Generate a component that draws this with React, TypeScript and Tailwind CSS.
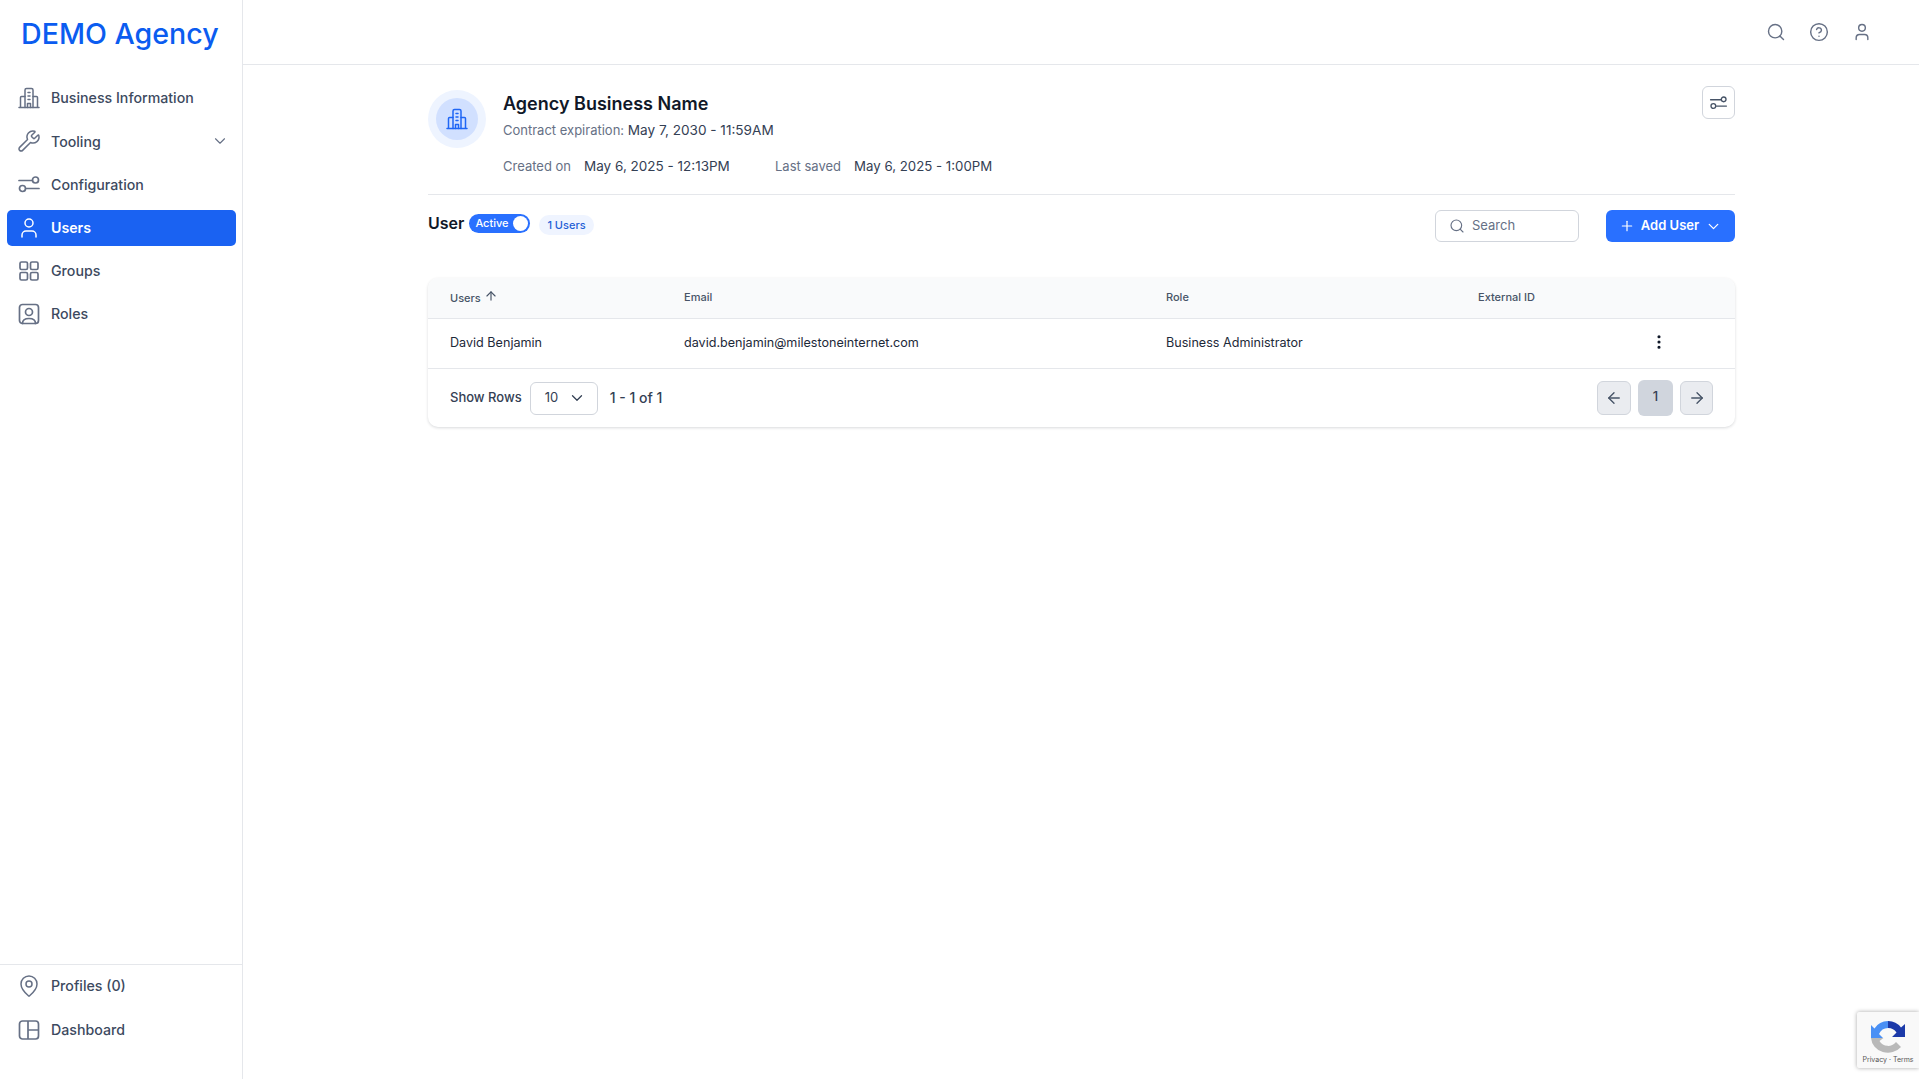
import { ArrowLeft, ArrowRight, ArrowUp, ChevronDown, CircleHelp, EllipsisVertical, MapPin, Plus, Search, User, Wrench } from 'lucide-react';

type IconProps = { className?: string };

const BuildingIcon = ({ className }: IconProps) => (
  <svg viewBox="0 0 24 24" fill="none" stroke="currentColor" strokeWidth="1.5" strokeLinecap="round" strokeLinejoin="round" className={className}>
    <path d="M2 21.5h20M3.5 21.5V11.5a1 1 0 0 1 1-1h3.5M20.500 21.500V11.500a1 1 0 0 0-1-1H16" />
    <path d="M8 21.500V4a1.500 1.500 0 0 1 1.500-1.500h5A1.500 1.500 0 0 1 16 4v17.500" />
    <path d="M11 6.500h2M11 10h2M11 13.500h2M10.500 21.500V17.500h3v4" />
  </svg>
);

const SlidersIcon = ({ className }: IconProps) => (
  <svg viewBox="0 0 24 24" fill="none" stroke="currentColor" strokeWidth="1.7" strokeLinecap="round" className={className}>
    <path d="M2 8.500h13M9.500 16.500H22" />
    <circle cx="18.500" cy="8" r="3" />
    <circle cx="5.500" cy="16.500" r="3" />
  </svg>
);

const GridIcon = ({ className }: IconProps) => (
  <svg viewBox="0 0 24 24" fill="none" stroke="currentColor" strokeWidth="1.7" className={className}>
    <rect x="3" y="3" width="7.500" height="7.500" rx="1.500" />
    <rect x="13.500" y="3" width="7.500" height="7.500" rx="1.500" />
    <rect x="3" y="13.500" width="7.500" height="7.500" rx="1.500" />
    <rect x="13.500" y="13.500" width="7.500" height="7.500" rx="1.500" />
  </svg>
);

const RolesIcon = ({ className }: IconProps) => (
  <svg viewBox="0 0 24 24" fill="none" stroke="currentColor" strokeWidth="1.7" strokeLinecap="round" className={className}>
    <rect x="2.500" y="2.500" width="19" height="19" rx="3" />
    <circle cx="12" cy="10" r="3.500" />
    <path d="M5.500 21.500c0-3.500 2.500-5 6.500-5s6.500 1.500 6.500 5" />
  </svg>
);

const LayoutIcon = ({ className }: IconProps) => (
  <svg viewBox="0 0 24 24" fill="none" stroke="currentColor" strokeWidth="1.7" className={className}>
    <rect x="2.500" y="3" width="19" height="18" rx="3" />
    <path d="M11 3v18M11 12h10.500" />
  </svg>
);

const navItems = [
  { icon: BuildingIcon, label: 'Business Information' },
  { icon: Wrench, label: 'Tooling', chevron: true },
  { icon: SlidersIcon, label: 'Configuration' },
  { icon: User, label: 'Users', active: true },
  { icon: GridIcon, label: 'Groups' },
  { icon: RolesIcon, label: 'Roles' },
];

const footerItems = [
  { icon: MapPin, label: 'Profiles (0)' },
  { icon: LayoutIcon, label: 'Dashboard' },
];

const Sidebar = () => (
  <aside className="w-[243px] shrink-0 border-r border-gray-200 flex flex-col h-full">
    <div className="h-[68px] flex items-center pl-[21px] text-[28.600px] font-medium text-[#0b5cf0]">DEMO Agency</div>
    <nav className="pl-[7px] pr-[6px] pt-[12px] flex flex-col gap-[7.200px]">
      {navItems.map((item) => (
        <div
          key={item.label}
          className={
            item.active
              ? 'h-[36px] flex items-center gap-[10px] pl-[10px] pr-[7px] rounded-[5px] bg-[#1a62f2] text-white font-semibold text-[14.200px]'
              : 'h-[36px] flex items-center gap-[10px] pl-[10px] pr-[7px] rounded-[5px] text-[#3d4a5f] font-medium text-[14.200px]'
          }
        >
          <item.icon className={item.active ? 'w-[24px] h-[24px] shrink-0 text-white' : 'w-[24px] h-[24px] shrink-0 text-[#667085]'} strokeWidth={1.5} />
          <span>{item.label}</span>
          {item.chevron && <ChevronDown className="ml-auto w-[18px] h-[18px] text-[#667085]" strokeWidth={1.5} />}
        </div>
      ))}
    </nav>
    <div className="mt-auto border-t border-gray-200 px-[7px] pt-[3px] pb-[31px] flex flex-col gap-[8px]">
      {footerItems.map((item) => (
        <div key={item.label} className="h-[36px] flex items-center gap-[10px] pl-[10px] text-[#3d4a5f] font-medium text-[14.200px]">
          <item.icon className="w-[24px] h-[24px] shrink-0 text-[#667085]" strokeWidth={1.5} />
          <span>{item.label}</span>
        </div>
      ))}
    </div>
  </aside>
);

const Header = () => (
  <header className="h-[65px] shrink-0 border-b border-gray-200 flex items-center justify-end gap-[23px] pr-[47px]">
    <Search className="w-[20px] h-[20px] text-[#667085]" strokeWidth={1.7} />
    <CircleHelp className="w-[20px] h-[20px] text-[#667085]" strokeWidth={1.7} />
    <User className="w-[20px] h-[20px] text-[#667085]" strokeWidth={1.7} />
  </header>
);

const Summary = () => (
  <section className="h-[130px] border-b border-gray-200 flex items-start pt-[25px]">
    <div className="w-[58px] h-[58px] rounded-full bg-[#eef4ff] flex items-center justify-center">
      <div className="w-[42px] h-[42px] rounded-full bg-[#d1e0ff] flex items-center justify-center">
        <BuildingIcon className="w-[24px] h-[24px] text-[#1f66f5]" />
      </div>
    </div>
    <div className="ml-[17px]">
      <h1 className="text-lg leading-[28px] font-semibold text-[#101828]">Agency Business Name</h1>
      <p className="text-[13px] leading-[20px] mt-[2px] text-[#667085]">
        Contract expiration: <span className="text-[13.600px] text-[#344054]">May 7, 2030 - 11:59AM</span>
      </p>
      <div className="flex text-[13px] leading-[20px] mt-[16px]">
        <span className="text-[#667085] w-[81px]">Created on</span>
        <span className="text-[13.500px] text-[#344054] w-[191px]">May 6, 2025 - 12:13PM</span>
        <span className="text-[#667085] w-[79px]">Last saved</span>
        <span className="text-[13.250px] text-[#344054]">May 6, 2025 - 1:00PM</span>
      </div>
    </div>
    <button className="ml-auto -mt-[4px] w-[33px] h-[33px] rounded-[6px] border border-gray-300 flex items-center justify-center text-[#475467]">
      <SlidersIcon className="w-[19px] h-[19px]" />
    </button>
  </section>
);

const Toolbar = () => (
  <div className="flex items-center h-[32px] mt-[15px]">
    <span className="text-base font-semibold text-[#101828] -mt-[6px]">User</span>
    <div className="ml-[5px] -mt-[5px] w-[61px] h-[19px] rounded-full bg-[#2970ff] flex items-center justify-between pl-[6px] pr-[2px]">
      <span className="text-[11px] font-medium text-white">Active</span>
      <span className="w-[15px] h-[15px] rounded-full bg-white" />
    </div>
    <span className="ml-[9px] -mt-[2px] h-[20px] px-[8px] rounded-full bg-[#eff4ff] flex items-center text-[11px] font-medium text-[#1f5fd6]">1 Users</span>
    <div className="ml-auto w-[144px] h-[32px] rounded-[6px] border border-gray-300 flex items-center pl-[13px] gap-[7px] text-[13px] text-[#667085]">
      <Search className="w-[16px] h-[16px]" strokeWidth={1.7} />
      <span>Search</span>
    </div>
    <button className="ml-[27px] w-[129px] h-[32px] rounded-[6px] bg-[#2970ff] flex items-center justify-center gap-[6px] text-[13px] font-semibold text-white">
      <Plus className="w-[16px] h-[16px]" strokeWidth={1.8} />
      <span>Add User</span>
      <ChevronDown className="w-[17px] h-[17px]" strokeWidth={1.8} />
    </button>
  </div>
);

const UsersTable = () => (
  <div className="mt-[36px] rounded-[10px] bg-white shadow-[0_1px_3px_rgba(16,24,40,0.16)] overflow-hidden">
    <div className="h-[41px] bg-[#f9fafb] border-b border-gray-200 grid grid-cols-[234px_482px_312px_1fr] items-center pl-[22px] text-[11px] font-medium text-[#475467] pb-[2px]">
      <div className="flex items-center gap-[3px]">
        <span className="mt-[2px]">Users</span>
        <ArrowUp className="w-[14px] h-[14px] -mt-[3px]" strokeWidth={2} />
      </div>
      <span>Email</span>
      <span>Role</span>
      <span>External ID</span>
    </div>
    <div className="h-[50px] border-b border-gray-200 grid grid-cols-[234px_482px_312px_1fr] items-center pl-[22px] text-[12.600px] text-[#1d2939]">
      <span>David Benjamin</span>
      <span>david.benjamin@milestoneinternet.com</span>
      <span>Business Administrator</span>
      <div className="flex justify-end pr-[67px] pb-[3px]">
        <EllipsisVertical className="w-[18px] h-[18px] text-[#101828]" strokeWidth={2.200} />
      </div>
    </div>
    <div className="h-[58px] flex items-center pl-[22px] pr-[22px] text-[13px] text-[#344054]">
      <span className="font-medium">Show Rows</span>
      <div className="ml-[8px] w-[68px] h-[33px] rounded-[6px] border border-gray-300 flex items-center pl-[14px] gap-[10px]">
        <span>10</span>
        <ChevronDown className="w-[18px] h-[18px]" strokeWidth={1.7} />
      </div>
      <span className="ml-[12px] text-[14px] font-medium -mt-[1px]">1 - 1 of 1</span>
      <div className="ml-auto flex items-center gap-[7px]">
        <button className="w-[34px] h-[34px] rounded-[6px] border border-gray-300 bg-[#eaecf0] flex items-center justify-center text-[#475467]">
          <ArrowLeft className="w-[18px] h-[18px]" strokeWidth={1.8} />
        </button>
        <div className="w-[35px] h-[36px] rounded-[6px] bg-[#d0d5dd] flex items-center justify-center font-medium text-[#344054] pb-[3px]">1</div>
        <button className="w-[33px] h-[34px] rounded-[6px] border border-gray-300 bg-[#eaecf0] flex items-center justify-center text-[#475467]">
          <ArrowRight className="w-[18px] h-[18px]" strokeWidth={1.8} />
        </button>
      </div>
    </div>
  </div>
);

const RecaptchaBadge = () => (
  <div className="absolute right-0 bottom-[11px] w-[62px] h-[56px] bg-[#f9f9f9] shadow-[0_0_4px_rgba(0,0,0,0.35)] flex flex-col items-center rounded-l-[2px]">
    <svg viewBox="0 0 36 36" className="w-[36px] h-[36px] mt-[7px]">
      <path d="M18 2a16 16 0 0 0-13.500 7.500L1 6v13h12l-4-4a10 10 0 0 1 9-6z" fill="#4a90f5" />
      <path d="M18 2a16 16 0 0 1 13 6.500L35 5v13H22l4.500-4.500A10 10 0 0 0 18 9z" fill="#1c3aa9" />
      <path d="M1 19a17 16 0 0 0 30 9l-5-5a10 10 0 0 1-16.500-1l4-3z" fill="#b9b9b9" />
    </svg>
    <span className="text-[7px] leading-[9px] text-[#555555]">Privacy · Terms</span>
  </div>
);

export default function App() {
  return (
    <div className="relative h-screen flex bg-white overflow-hidden font-['Inter',sans-serif]">
      <Sidebar />
      <div className="flex-1 min-w-0 flex flex-col">
        <Header />
        <main className="flex-1 pl-[185px] pr-[184px]">
          <Summary />
          <Toolbar />
          <UsersTable />
        </main>
      </div>
      <RecaptchaBadge />
    </div>
  );
}
